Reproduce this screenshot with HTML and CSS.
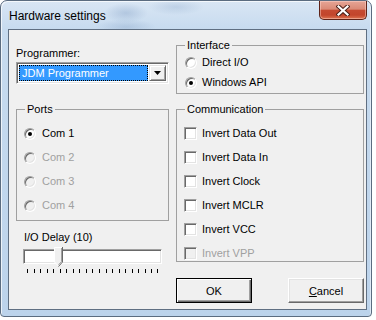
FILE: index.html
```html
<!DOCTYPE html>
<html lang="en">
<head>
    <meta charset="UTF-8">
    <meta name="viewport" content="width=device-width, initial-scale=1.0">
    <title>Hardware settings</title>
    <link rel="stylesheet" href="styles.css">
</head>
<body>
    <div class="window">
        <div class="titlebar">
            <span class="title">Hardware settings</span>
            <button class="close">
                <svg width="14" height="11" viewBox="0 0 14 11">
                    <path d="M2.5 1.5 L11.5 9.5 M11.5 1.5 L2.5 9.5" stroke="#4a2018" stroke-width="4.2" stroke-linecap="square"/>
                    <path d="M2.5 1.5 L11.5 9.5 M11.5 1.5 L2.5 9.5" stroke="#ffffff" stroke-width="2.2" stroke-linecap="square"/>
                </svg>
            </button>
        </div>
        <div class="client">
            <div class="col left">
                <div class="label">Programmer:</div>
                <div class="combo">
                    <div class="combo-field"><span>JDM Programmer</span></div>
                    <div class="combo-btn">
                        <svg width="7" height="4" viewBox="0 0 7 4"><path d="M0 0 H7 L3.5 4 Z" fill="#000"/></svg>
                    </div>
                </div>
                <fieldset class="group ports">
                    <legend>Ports</legend>
                    <div class="opts">
                        <label class="opt"><span class="radio checked"></span>Com 1</label>
                        <label class="opt disabled"><span class="radio"></span>Com 2</label>
                        <label class="opt disabled"><span class="radio"></span>Com 3</label>
                        <label class="opt disabled"><span class="radio"></span>Com 4</label>
                    </div>
                </fieldset>
                <div class="label delay">I/O Delay (10)</div>
                <div class="trackbar">
                    <div class="channel"></div>
                    <svg class="thumb" width="9" height="20" viewBox="0 0 9 20">
                        <path d="M0.5 15 V0.5 H8.5 V15 L4.5 19.5 Z" fill="#f0f0f0"/>
                        <path d="M4.5 19 L0.5 15 V0.5 H8" fill="none" stroke="#ffffff"/>
                        <path d="M8.5 0 V15 L4.5 19.5" fill="none" stroke="#696969"/>
                        <path d="M7.5 1 V14.6 L4.5 17.8" fill="none" stroke="#a0a0a0"/>
                    </svg>
                    <div class="ticks">
                        <span></span><span></span><span></span><span></span><span></span>
                        <span></span><span></span><span></span><span></span><span></span>
                        <span></span><span></span><span></span><span></span><span></span>
                        <span></span><span></span><span></span><span></span><span></span>
                        <span></span>
                    </div>
                </div>
            </div>
            <div class="col right">
                <fieldset class="group iface">
                    <legend>Interface</legend>
                    <div class="opts">
                        <label class="opt"><span class="radio"></span>Direct I/O</label>
                        <label class="opt"><span class="radio checked"></span>Windows API</label>
                    </div>
                </fieldset>
                <fieldset class="group comm">
                    <legend>Communication</legend>
                    <div class="opts">
                        <label class="opt"><span class="check"></span>Invert Data Out</label>
                        <label class="opt"><span class="check"></span>Invert Data In</label>
                        <label class="opt"><span class="check"></span>Invert Clock</label>
                        <label class="opt"><span class="check"></span>Invert MCLR</label>
                        <label class="opt"><span class="check"></span>Invert VCC</label>
                        <label class="opt disabled"><span class="check"></span>Invert VPP</label>
                    </div>
                </fieldset>
                <div class="buttons">
                    <button class="btn default">OK</button>
                    <button class="btn"><u>C</u>ancel</button>
                </div>
            </div>
        </div>
    </div>
</body>
</html>
```

FILE: styles.css
```css
body {
    margin: 0;
    background-color: #ffffff;
    font-family: "Liberation Sans", Arial, sans-serif;
    font-size: 11px;
    color: #000000;
}
.window {
    width: 372px;
    height: 317px;
    box-sizing: border-box;
    border: 1px solid #5b6c80;
    border-radius: 7px 7px 4px 4px;
    padding: 0 4px 6px 7px;
    background:
        radial-gradient(ellipse 22px 10px at 125px 12px, rgba(120,150,190,0.35), transparent),
        radial-gradient(ellipse 28px 8px at 175px 6px, rgba(120,150,190,0.25), transparent),
        radial-gradient(ellipse 30px 8px at 125px 26px, rgba(120,150,190,0.3), transparent),
        linear-gradient(to bottom, #d9e6f4 0, #c7dbef 28px, #bcd3eb 100%);
    box-shadow: inset 1px 1px 0 rgba(255,255,255,0.7), inset -1px 0 0 rgba(255,255,255,0.5);
}
.titlebar {
    height: 28px;
    display: flex;
    align-items: flex-start;
}
.title {
    font-size: 12px;
    line-height: 14px;
    padding-top: 8px;
    padding-left: 1px;
    color: #000000;
}
.close {
    margin-left: auto;
    width: 48px;
    height: 19px;
    padding: 0;
    border: 1px solid #5e2318;
    border-top: none;
    border-radius: 0 0 5px 5px;
    background: linear-gradient(to bottom, #e6a596 0, #da8a76 45%, #c54a31 52%, #c2452c 78%, #dd7451 100%);
    box-shadow: inset 0 0 0 1px rgba(255,220,210,0.45);
    display: flex;
    align-items: center;
    justify-content: center;
}
.client {
    height: 281px;
    box-sizing: border-box;
    border: 1px solid #5f6f82;
    background-color: #f0f0f0;
    padding-left: 7px;
    display: flex;
    gap: 7px;
}
.col {
    display: flex;
    flex-direction: column;
}
.left {
    width: 153px;
}
.right {
    width: 188px;
}
.label {
    line-height: 13px;
    margin-top: 17px;
}
.combo {
    margin-top: 2px;
    height: 22px;
    box-sizing: border-box;
    border: 1px solid;
    border-color: #a0a0a0 #ffffff #ffffff #a0a0a0;
    box-shadow: inset 1px 1px 0 #696969, inset -1px -1px 0 #e3e3e3;
    background-color: #ffffff;
    padding: 2px;
    display: flex;
    gap: 1px;
}
.combo-field {
    flex: 1;
    background-color: #3399ff;
    outline: 1px dotted #000000;
    outline-offset: -1px;
    color: #ffffff;
    display: flex;
    align-items: center;
    padding-left: 3px;
    font-size: 11px;
}
.combo-btn {
    width: 17px;
    box-sizing: border-box;
    background-color: #f0f0f0;
    border: 1px solid;
    border-color: #e3e3e3 #696969 #696969 #e3e3e3;
    box-shadow: inset 1px 1px 0 #ffffff, inset -1px -1px 0 #a0a0a0;
    display: flex;
    align-items: center;
    justify-content: center;
}
.group {
    margin: 0;
    padding: 0;
    min-width: 0;
    border: 1px solid #a0a0a0;
    box-sizing: border-box;
}
.group legend {
    margin-left: 8px;
    padding: 0 2px;
    line-height: 13px;
}
.opts {
    display: flex;
    flex-direction: column;
    gap: 11px;
    padding: 11px 0 8px 7px;
}
.opt {
    height: 13px;
    line-height: 13px;
    display: flex;
    align-items: center;
    gap: 6px;
}
.opt.disabled {
    color: #a0a0a0;
}
.ports {
    margin-top: 19px;
}
.iface {
    margin-top: 9px;
}
.iface .opts {
    gap: 7px;
    padding: 4px 0 4px 8px;
}
.iface .opt {
    gap: 5px;
}
.comm {
    margin-top: 9px;
}
.comm .opts {
    padding-bottom: 1px;
}
.comm .opt {
    gap: 5px;
}
.radio {
    width: 12px;
    height: 12px;
    box-sizing: border-box;
    border-radius: 50%;
    border: 1px solid;
    border-color: #a0a0a0 #ffffff #ffffff #a0a0a0;
    box-shadow: inset 1px 1px 0 #696969, inset -1px -1px 0 #e3e3e3;
    background-color: #ffffff;
    display: flex;
    align-items: center;
    justify-content: center;
}
.radio.checked::after {
    content: "";
    width: 4px;
    height: 4px;
    border-radius: 50%;
    background-color: #000000;
}
.disabled .radio,
.disabled .check {
    background-color: #f0f0f0;
}
.check {
    width: 13px;
    height: 13px;
    box-sizing: border-box;
    border: 1px solid;
    border-color: #a0a0a0 #ffffff #ffffff #a0a0a0;
    box-shadow: inset 1px 1px 0 #696969, inset -1px -1px 0 #e3e3e3;
    background-color: #ffffff;
}
.delay {
    margin-top: 10px;
    margin-left: 8px;
}
.trackbar {
    position: relative;
    margin-top: 3px;
    margin-left: 7px;
    width: 139px;
    height: 27px;
}
.channel {
    margin-top: 2px;
    height: 15px;
    box-sizing: border-box;
    border: 1px solid;
    border-color: #a0a0a0 #ffffff #ffffff #a0a0a0;
    box-shadow: inset 1px 1px 0 #696969, inset -1px -1px 0 #e3e3e3;
    background-color: #ffffff;
}
.thumb {
    position: absolute;
    left: 31px;
    top: 0;
}
.ticks {
    margin-top: 5px;
    margin-left: 4px;
    width: 131px;
    display: flex;
    justify-content: space-between;
}
.ticks span {
    width: 1px;
    height: 4px;
    background-color: #000000;
}
.ticks span:nth-last-child(2) {
    margin-right: -1px;
}
.buttons {
    margin-top: 16px;
    display: flex;
    justify-content: space-between;
}
.btn {
    width: 76px;
    height: 25px;
    box-sizing: border-box;
    font-family: "Liberation Sans", Arial, sans-serif;
    font-size: 11px;
    color: #000000;
    background-color: #f0f0f0;
    border: 1px solid;
    border-color: #ffffff #696969 #696969 #ffffff;
    box-shadow: inset -1px -1px 0 #a0a0a0, inset 1px 1px 0 #e3e3e3;
    padding: 0;
}
.btn.default {
    border: 1px solid #000000;
    box-shadow: inset 1px 1px 0 #ffffff, inset -1px -1px 0 #696969, inset -2px -2px 0 #a0a0a0;
}
```
